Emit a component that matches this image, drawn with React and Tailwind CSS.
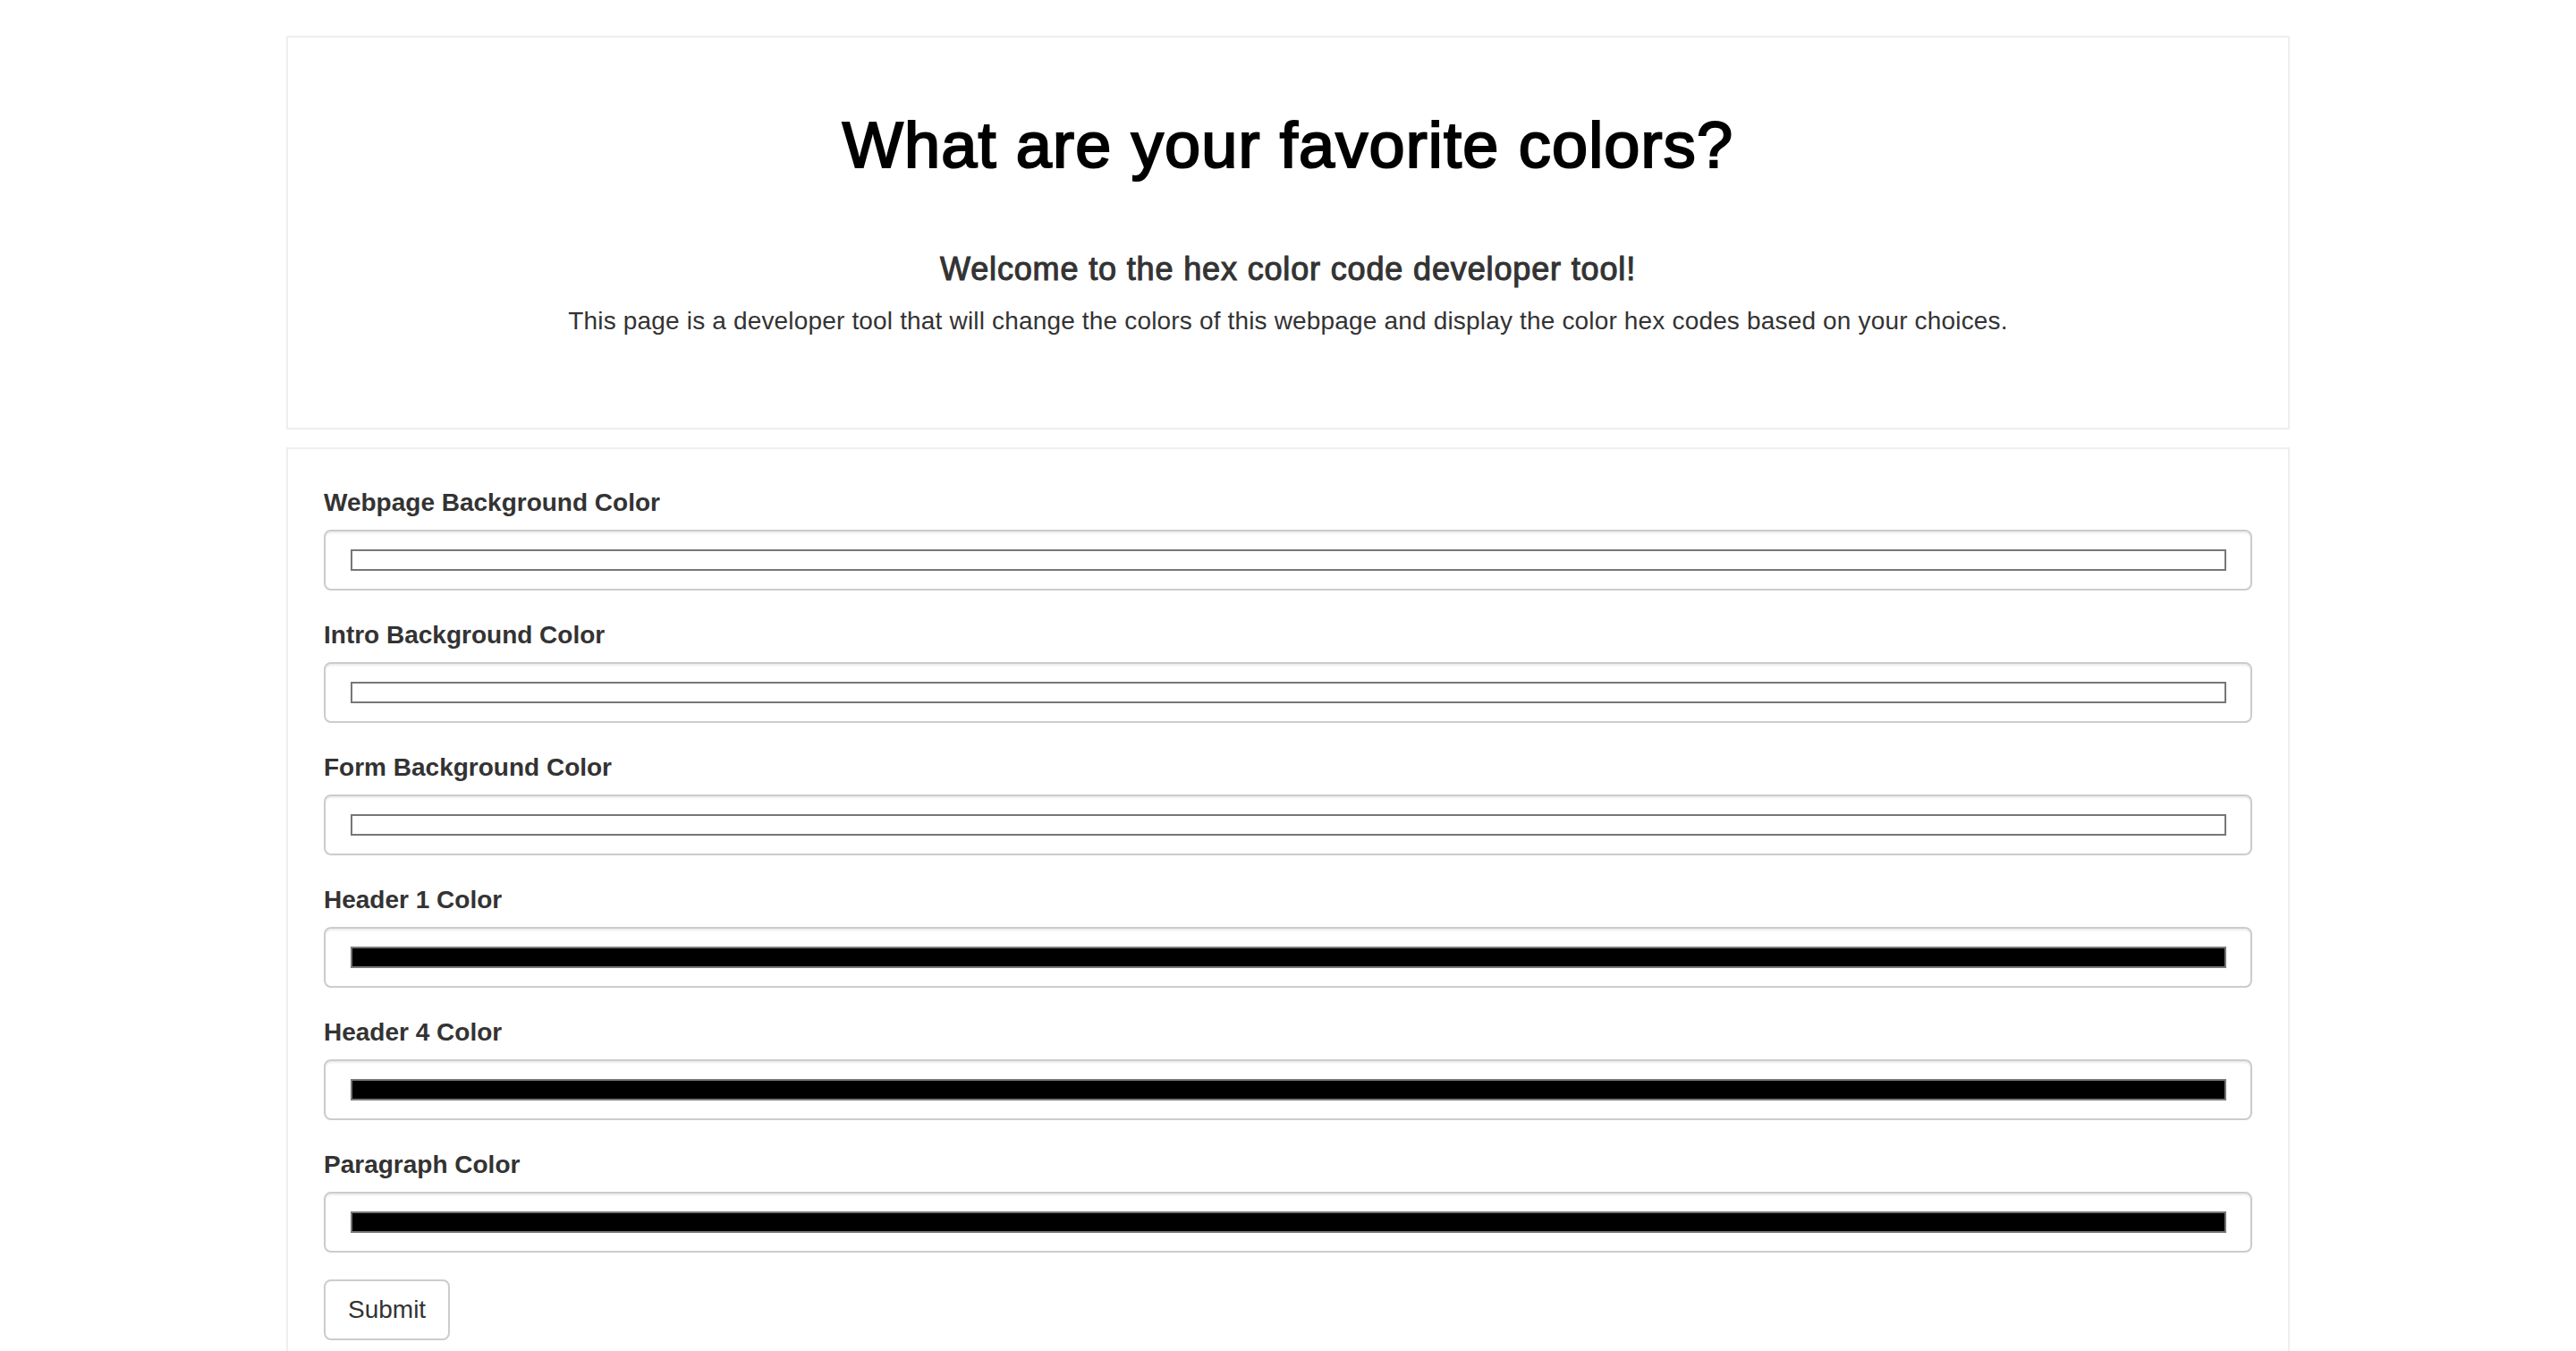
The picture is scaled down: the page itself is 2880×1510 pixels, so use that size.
export default function App() {
  const fields = [
    { label: "Webpage Background Color", value: "#ffffff" },
    { label: "Intro Background Color", value: "#ffffff" },
    { label: "Form Background Color", value: "#ffffff" },
    { label: "Header 1 Color", value: "#000000" },
    { label: "Header 4 Color", value: "#000000" },
    { label: "Paragraph Color", value: "#000000" },
  ];

  return (
    <div className="min-h-screen bg-white font-['Liberation_Sans',Arial,Helvetica,sans-serif] text-[#333]">
      <div className="mx-auto w-[2240px] pt-[40px]">
        {/* Intro */}
        <div className="border-2 border-[#eee] bg-white text-center pt-[81px] pb-[100px] h-[440px]">
          <h1 className="text-[72px] leading-[79px] text-black font-normal tracking-[1.2px] [-webkit-text-stroke:2.2px_black]">
            What are your favorite colors?
          </h1>
          <h4 className="mt-[79px] text-[36px] leading-[40px] font-normal text-[#333] tracking-[0.85px] [-webkit-text-stroke:1.1px_#333]">
            Welcome to the hex color code developer tool!
          </h4>
          <p className="mt-[18px] text-[28px] leading-[40px] text-[#333] tracking-[0.17px]">
            This page is a developer tool that will change the colors of this webpage and display the color hex codes based on your choices.
          </p>
        </div>

        {/* Form */}
        <div className="mt-[20px] border-2 border-[#eee] bg-white px-[40px] pt-[40px] pb-[40px]">
          {fields.map((f, i) => (
            <div key={i} className="mb-[30px]">
              <label className="block mb-[10px] text-[28px] leading-[40px] font-bold text-[#333]">
                {f.label}
              </label>
              <div className="h-[68px] border-2 border-[#ccc] rounded-[8px] bg-white flex items-center pl-[28px] pr-[27px] shadow-[inset_0_2px_2px_rgba(0,0,0,0.075)]">
                <div
                  className="w-full h-[24px] border-2 border-[#777]"
                  style={{ backgroundColor: f.value }}
                />
              </div>
            </div>
          ))}
          <button className="h-[68px] px-[25px] border-2 border-[#ccc] rounded-[8px] bg-white text-[28px] leading-[40px] text-[#333]">
            Submit
          </button>
        </div>
      </div>
    </div>
  );
}
